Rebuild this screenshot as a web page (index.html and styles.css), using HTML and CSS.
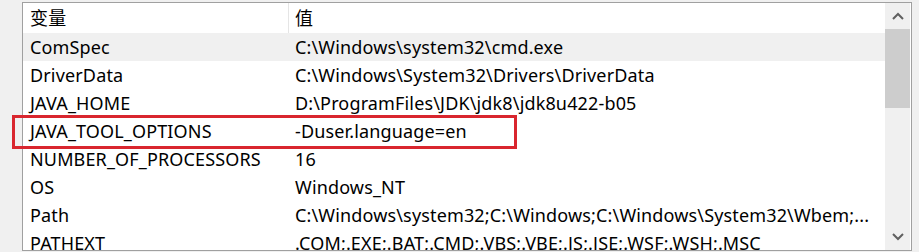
FILE: index.html
```html
<!DOCTYPE html>
<html lang="zh-CN">
<head>
    <meta charset="UTF-8">
    <title>系统变量</title>
    <link rel="stylesheet" href="styles.css">
</head>
<body>
    <div class="list">
        <div class="table">
            <div class="row header">
                <div class="cell name">变量</div>
                <div class="cell value">值</div>
            </div>
            <div class="row hover">
                <div class="cell name">ComSpec</div>
                <div class="cell value">C:\Windows\system32\cmd.exe</div>
            </div>
            <div class="row">
                <div class="cell name">DriverData</div>
                <div class="cell value">C:\Windows\System32\Drivers\DriverData</div>
            </div>
            <div class="row">
                <div class="cell name">JAVA_HOME</div>
                <div class="cell value">D:\ProgramFiles\JDK\jdk8\jdk8u422-b05</div>
            </div>
            <div class="row">
                <div class="cell name">JAVA_TOOL_OPTIONS</div>
                <div class="cell value">-Duser.language=en</div>
            </div>
            <div class="row">
                <div class="cell name">NUMBER_OF_PROCESSORS</div>
                <div class="cell value">16</div>
            </div>
            <div class="row">
                <div class="cell name">OS</div>
                <div class="cell value">Windows_NT</div>
            </div>
            <div class="row">
                <div class="cell name">Path</div>
                <div class="cell value">C:\Windows\system32;C:\Windows;C:\Windows\System32\Wbem;...</div>
            </div>
            <div class="row">
                <div class="cell name">PATHEXT</div>
                <div class="cell value">.COM;.EXE;.BAT;.CMD;.VBS;.VBE;.JS;.JSE;.WSF;.WSH;.MSC</div>
            </div>
        </div>
        <div class="scrollbar">
            <div class="arrow">
                <svg width="12" height="8" viewBox="0 0 12 8"><path d="M1 7 L6 2 L11 7" fill="none" stroke="#606060" stroke-width="2"/></svg>
            </div>
            <div class="track">
                <div class="thumb"></div>
            </div>
            <div class="arrow">
                <svg width="12" height="8" viewBox="0 0 12 8"><path d="M1 1 L6 6 L11 1" fill="none" stroke="#606060" stroke-width="2"/></svg>
            </div>
        </div>
    </div>
    <div class="mark"></div>
</body>
</html>
```

FILE: styles.css
```css
body {
    margin: 0;
    background-color: #f0f0f0;
    font-family: "Noto Sans", "Noto Sans CJK SC", sans-serif;
    font-size: 18px;
    letter-spacing: 0.15px;
    color: #000;
    width: 919px;
    height: 252px;
    overflow: hidden;
    position: relative;
}
.list {
    display: flex;
    margin: 2px 0 0 22px;
    width: 888px;
    height: 247px;
    border: 1px solid #a0a0a0;
    background-color: #fff;
    overflow: hidden;
}
.table {
    flex: 1;
    overflow: hidden;
}
.row {
    display: flex;
    height: 28px;
    align-items: center;
    white-space: nowrap;
}
.row.header {
    height: 30px;
}
.row.hover {
    background-color: #f0f0f0;
}
.cell.name {
    width: 258px;
    padding-left: 7px;
    box-sizing: content-box;
}
.cell.value {
    padding-left: 7px;
}
.header .cell {
    height: 30px;
    line-height: 30px;
}
.header .cell.name {
    border-right: 1px solid #e5e5e5;
}
.header .cell.value {
    padding-left: 6px;
}
.scrollbar {
    width: 25px;
    margin-right: 1px;
    display: flex;
    flex-direction: column;
    background-color: #f0f0f0;
}
.arrow {
    height: 26px;
    display: flex;
    align-items: center;
    justify-content: center;
}
.track {
    flex: 1;
}
.thumb {
    height: 79px;
    background-color: #cdcdcd;
}
.mark {
    position: absolute;
    left: 12px;
    top: 115px;
    width: 499px;
    height: 28px;
    border: 3px solid #d9262e;
}
```
